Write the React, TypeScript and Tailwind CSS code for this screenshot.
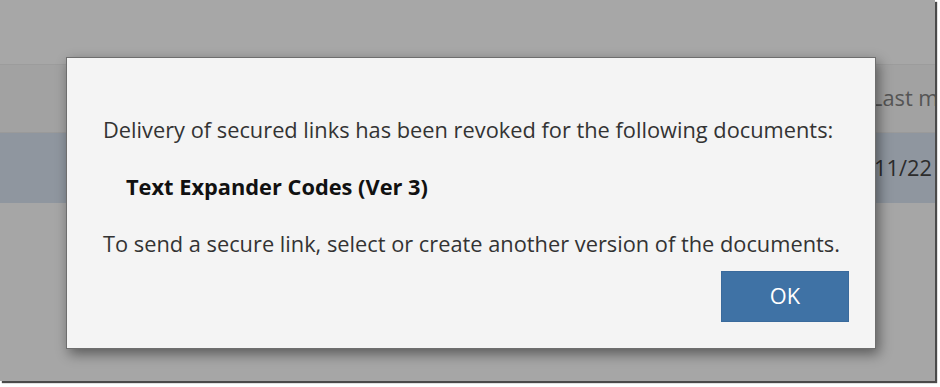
import React from 'react';

const App = () => {
  return (
    <div className="w-[940px] h-[387px] bg-white overflow-hidden" style={{ fontFamily: '"Open Sans", "Noto Sans", sans-serif' }}>
      {/* screenshot frame */}
      <div className="relative w-[935px] h-[381px] bg-[#a6a6a6] overflow-hidden shadow-[2px_2px_1px_#4a4a4a]">
        {/* page behind the overlay */}
        <div className="flex flex-col">
          <div className="h-[64px] bg-[#a7a7a7]" />
          <div className="h-[68px] bg-[#a2a2a2] border-t border-[#9c9c9c] flex items-center pl-[871px] whitespace-nowrap">
            <span className="text-[21.8px] text-[#555]">Last modified</span>
          </div>
          <div className="h-[71px] bg-[#8f969f] border-t border-[#9a9a9a] flex items-center pl-[874px] whitespace-nowrap">
            <span className="text-[21.8px] text-[#2c2c2c]">11/22</span>
          </div>
          <div className="flex-1 bg-[#a6a6a6]" />
        </div>

        {/* dialog */}
        <div className="absolute left-[66px] top-[57px] w-[810px] h-[292px] bg-[#f4f4f4] border border-[#6e6e6e] shadow-[3px_5px_12px_rgba(0,0,0,0.45)] pl-[36px] pr-[26px] pt-[57px] flex flex-col">
          <p className="text-[21.8px] leading-[30px] text-[#333] whitespace-nowrap">
            Delivery of secured links has been revoked for the following documents:
          </p>
          <p className="mt-[27px] pl-[23px] text-[21.8px] leading-[30px] font-bold text-[#111]">
            Text Expander Codes (Ver 3)
          </p>
          <p className="mt-[27px] text-[21.8px] leading-[30px] text-[#333] whitespace-nowrap">
            To send a secure link, select or create another version of the documents.
          </p>
          <div className="mt-[12px] flex justify-end">
            <button className="w-[128px] h-[51px] bg-[#3f72a5] border border-[#3a6a9c] text-white text-[21.8px]">
              OK
            </button>
          </div>
        </div>
      </div>
    </div>
  );
};

export default App;
